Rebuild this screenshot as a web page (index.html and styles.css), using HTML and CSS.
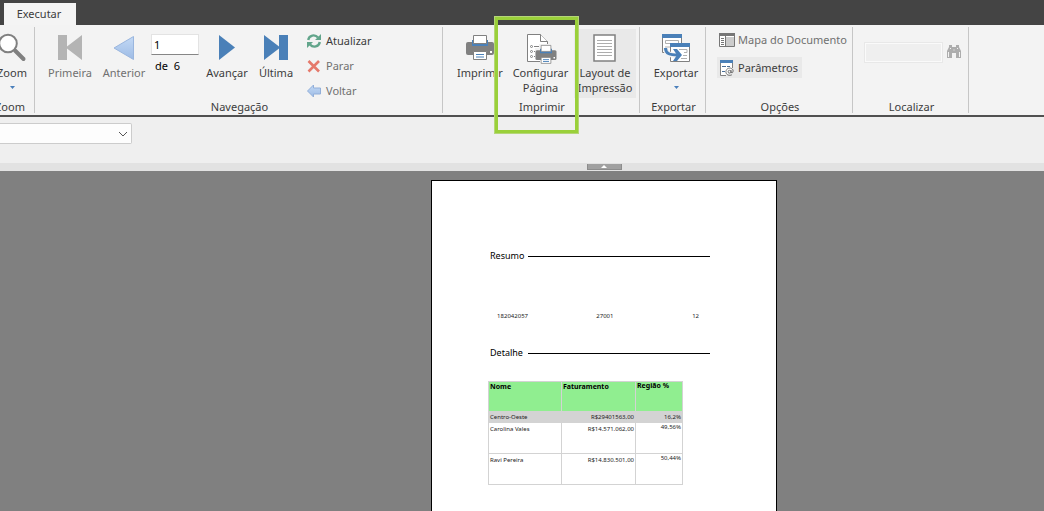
FILE: index.html
```html
<!DOCTYPE html>
<html lang="pt-BR">
<head>
<meta charset="utf-8">
<title>Executar</title>
<link rel="stylesheet" href="styles.css">
</head>
<body>
<div class="app">
  <header class="tabs"><button class="tab">Executar</button></header>

  <div class="ribbon">
    <section class="group group-zoom">
      <div class="body">
        <button class="big w44">
          <svg class="icon" viewBox="0 0 32 30"><path d="M19 17.500L27.500 26" stroke="#808080" stroke-width="4" stroke-linecap="round"/><circle cx="12" cy="10.500" r="8.800" fill="#fff" stroke="#808080" stroke-width="2"/></svg>
          <span>Zoom</span>
          <svg class="caret" viewBox="0 0 5 3"><path d="M0 0h5L2.500 3z" fill="#4a7fbb"/></svg>
        </button>
      </div>
      <h2>Zoom</h2>
    </section>

    <section class="group group-nav">
      <div class="body">
        <button class="big w54 dim">
          <svg class="icon" viewBox="0 0 32 30"><path d="M4 2h9v11.500L28 2v25L13 15.500V27H4z" fill="#b4b4b4"/></svg>
          <span>Primeira</span>
        </button>
        <button class="big w54 dim">
          <svg class="icon" viewBox="0 0 32 30"><defs><linearGradient id="blue" x2="0" y2="1"><stop offset="0" stop-color="#c3d9f5"/><stop offset="1" stop-color="#9dbbe5"/></linearGradient></defs><path d="M25.500 3.500v23L6 15z" fill="url(#blue)" stroke="#9ab6de" stroke-linejoin="round"/></svg>
          <span>Anterior</span>
        </button>
        <div class="pager">
          <input type="text" value="1" aria-label="Página">
          <span>de&nbsp; 6</span>
        </div>
        <button class="big w54 next">
          <svg class="icon" viewBox="0 0 32 30"><path d="M8 2l16 12.500L8 27z" fill="#4a80b8"/></svg>
          <span>Avançar</span>
        </button>
        <button class="big w44">
          <svg class="icon" viewBox="0 0 32 30"><path d="M4 2l15 11.500V2h9v25h-9V15.500L4 27z" fill="#4a80b8"/></svg>
          <span>Última</span>
        </button>
        <div class="commands">
          <button class="small"><svg class="icon14" viewBox="0 0 14 14"><g fill="none" stroke="#62a58b" stroke-width="2.400"><path d="M1.200 6C2 1 8 0 11 3.500M12.800 8C12 13 6 14 3 10.500"/></g><path d="M14 0v6H8zM0 14V8h6z" fill="#62a58b"/></svg>Atualizar</button>
          <button class="small dim"><svg class="icon14" viewBox="0 0 14 14"><path d="M1.500 2l10.500 10.500M12 2L1.500 12.500" stroke="#e5796b" stroke-width="2.600"/></svg>Parar</button>
          <button class="small dim"><svg class="icon14" viewBox="0 0 14 14"><path d="M.5 7L6.500 1v3H13.500v6H6.500v3z" fill="url(#blue)" stroke="#92afd9"/></svg>Voltar</button>
        </div>
      </div>
      <h2>Navegação</h2>
    </section>

    <section class="group group-print">
      <div class="body">
        <button class="big w54">
          <svg class="icon" viewBox="0 0 32 30"><g id="printer"><path d="M2 11q0-2 2-2h24q2 0 2 2v9q0 2-2 2H4q-2 0-2-2z" fill="#808080"/><path d="M8 7h16v6H8z" fill="#4a80b8"/><path d="M9.500 2.500h13v8h-13zM9.500 18.500h13v8h-13z" fill="#fff" stroke="#808080"/><path d="M12 21.500h8M12 24h8" stroke="#4a80b8" stroke-width="1.200"/><path d="M26 18h2v2h-2z" fill="#fff"/></g></svg>
          <span>Imprimir</span>
        </button>
        <button class="big w67">
          <svg class="icon" viewBox="0 0 32 30"><path d="M2.500 1.500h13l7 7v20h-20z" fill="#fff" stroke="#808080"/><path d="M15.500 1.500v7h7" fill="#fff" stroke="#808080"/><g fill="#fff" stroke="#808080"><circle cx="6.500" cy="13.500" r="1"/><circle cx="6.500" cy="18.500" r="1"/><circle cx="6.500" cy="23.500" r="1"/><path d="M9 13.500h7M9 18.500h2M9 23.500h2"/></g><path d="M10 15h4v-4h12v4h5v12h-5v4H15v-4h-5z" fill="#f3f3f3"/><use href="#printer" transform="translate(9 10.500) scale(.75)"/></svg>
          <span>Configurar<br>Página</span>
        </button>
        <button class="big w62 active">
          <svg class="icon" viewBox="0 0 32 30"><path d="M5 2h21v26H5z" fill="#fff" stroke="#808080" stroke-width="1.500"/><path d="M8 7.500h15M8 10.500h15M8 13.500h15M8 16.500h15M8 19.500h15M8 22.500h15" stroke="#adadad"/></svg>
          <span>Layout de<br>Impressão</span>
        </button>
      </div>
      <h2>Imprimir</h2>
    </section>

    <section class="group group-export">
      <div class="body">
        <button class="big w56">
          <svg class="icon" viewBox="0 0 32 30"><path d="M2.500 2.500h19v17h-19z" fill="#fff" stroke="#808080"/><path d="M2 1h20v4H2z" fill="#4a80b8"/><path d="M5.500 7.500h13v3h-13zM5 14h5" fill="none" stroke="#b0b0b0"/><path d="M10.500 10.500h19v18h-19z" fill="#fff" stroke="#808080"/><path d="M10 10h20v4H10z" fill="#4a80b8"/><path d="M19 16.500h8v3h-3M23 22.500h4M21 25.500h6" fill="none" stroke="#b0b0b0"/><path d="M5.500 15c0 6 5 7.500 12 7.500" fill="none" stroke="#f3f3f3" stroke-width="5"/><path d="M5.500 15c0 6 5 7 12 7" fill="none" stroke="#4a80b8" stroke-width="3"/><path d="M13 16h4l5 6-5 6h-4l4-6z" fill="#4a80b8"/></svg>
          <span>Exportar</span>
          <svg class="caret" viewBox="0 0 5 3"><path d="M0 0h5L2.500 3z" fill="#4a7fbb"/></svg>
        </button>
      </div>
      <h2>Exportar</h2>
    </section>

    <section class="group group-options">
      <div class="body options">
        <button class="option dim"><svg class="icon16" viewBox="0 0 16 16"><path d="M.5 1.500h15v13H.5z" fill="#fff" stroke="#777"/><path d="M0 1h16v3H0z" fill="#777"/><path d="M7 5h8v9H7z" fill="#ccc"/><path d="M6.500 4v10" stroke="#777"/><path d="M2 6.500h3M2 8.500h3M2 10.500h3M2 12.500h3" stroke="#777"/></svg>Mapa do Documento</button>
        <button class="option active"><svg class="icon16" viewBox="0 0 16 16"><path d="M7 15.500H1.500V.5h12V8" fill="#fff" stroke="#808080"/><path d="M1 0h13v3H1z" fill="#4a80b8"/><path d="M3 6.500h4M8 6.500h3M3 11.500h3" stroke="#4a6f98"/><g fill="none" stroke="#666" stroke-width=".9"><circle cx="10.500" cy="11.700" r="1.400"/><path d="M12 10v2.500q2 1 2.200-1.500c-.2-4-7-4-7.300.7 0 3.600 3.600 4.300 6 3.100"/></g></svg>Parâmetros</button>
      </div>
      <h2>Opções</h2>
    </section>

    <section class="group group-find">
      <div class="body find">
        <input type="text" aria-label="Localizar" disabled>
        <button class="find-button" aria-label="Localizar" disabled><svg class="icon16" viewBox="0 0 16 16"><path d="M3 1h3v2h4V1h3v2l2 4v7h-5v-5H6v5H1V7l2-4z" fill="#adadad"/><path d="M2.500 8v5M13.500 8v5M4 4.500h1M11 4.500h1M7.500 6h1" stroke="#f3f3f3"/></svg></button>
      </div>
      <h2>Localizar</h2>
    </section>

    <div class="callout"></div>
  </div>

  <div class="parameters">
    <div class="combo">
      <select aria-label="Parâmetro"><option></option></select>
      <svg class="chevron" viewBox="0 0 10 6"><path d="M1 1l4 4 4-4" fill="none" stroke="#555"/></svg>
    </div>
  </div>
  <div class="splitter"><button class="handle" aria-label="Recolher"><svg viewBox="0 0 6 3"><path d="M0 3h6L3 0z" fill="#fff"/></svg></button></div>

  <main class="viewer">
    <article class="page">
      <h3>Resumo</h3>
      <div class="totals"><span>182042057</span><span>27001</span><span>12</span></div>
      <h3>Detalhe</h3>
      <table>
        <colgroup><col class="name"><col class="amount"><col class="share"></colgroup>
        <thead><tr><th>Nome</th><th>Faturamento</th><th class="raised">Região %</th></tr></thead>
        <tbody>
          <tr class="region"><td>Centro-Oeste</td><td>R$29401563,00</td><td>16,2%</td></tr>
          <tr><td>Carolina Vales</td><td>R$14.571.062,00</td><td class="raised">49,56%</td></tr>
          <tr><td>Ravi Pereira</td><td>R$14.830.501,00</td><td class="raised">50,44%</td></tr>
        </tbody>
      </table>
    </article>
  </main>
</div>
</body>
</html>
```
FILE: styles.css
```css
* { box-sizing: border-box; }
body { margin: 0; font: 11px/15px "Noto Sans", "Open Sans", sans-serif; color: #3c3c3c; }
button, input, select { font: inherit; color: inherit; margin: 0; padding: 0; border: 0; background: none; border-radius: 0; }
h2, h3 { margin: 0; font-weight: normal; }
svg { display: block; overflow: visible; flex: none; }

.app { display: flex; flex-direction: column; min-height: 100vh; overflow: hidden; }
.tabs { display: flex; height: 25px; padding: 3px 4px 0; background: #444; }
.tab { width: 72px; padding: 0 2px 2px 0; background: #f4f4f4; }

.ribbon { position: relative; display: flex; padding: 2px 0; background: #f3f3f3; border-bottom: 2px solid #505050; }
.group { display: flex; flex-direction: column; flex: none; border-right: 1px solid #c6c6c6; }
.body { display: flex; align-items: flex-start; height: 73px; padding-top: 2px; }
.group h2 { padding-left: 2px; font-size: 11px; line-height: 13px; text-align: center; }
.group-zoom { width: 51px; margin-left: -16px; }
.group-zoom .body { justify-content: flex-end; }
.group-nav { width: 408px; }
.group-nav .body { padding-left: 8px; }
.group-print { width: 197px; }
.group-print .body { padding-left: 10px; }
.group-export { width: 66px; }
.group-export .body { padding-left: 8px; }
.group-options { width: 147px; }
.group-find { width: 116px; }

.big { display: flex; flex-direction: column; align-items: center; flex: none; height: 69px; padding-top: 4px; white-space: nowrap; }
.big span { margin-top: 2px; line-height: 15px; }
.icon { width: 32px; height: 30px; }
.caret { width: 5px; height: 3px; margin-top: 6px; }
.w44 { width: 44px; }
.w54 { width: 54px; }
.w56 { width: 56px; }
.w62 { width: 62px; }
.w67 { width: 67px; }
.dim { color: #707070; }
.active { background: #e9e9e9; }
.next { margin-left: 1px; }

.pager { display: flex; flex-direction: column; gap: 3px; width: 48px; padding-top: 5px; color: #000; }
.pager input { width: 100%; height: 21px; padding: 0 2px; background: #fff; border: 1px solid #e3e3e3; border-bottom-color: #868686; }
.pager span { padding-left: 4px; line-height: 15px; }

.group-nav .commands { display: flex; flex-direction: column; margin: -1px 0 0 9px; }
.small { display: flex; align-items: center; gap: 5px; height: 25px; }
.icon14 { width: 14px; height: 14px; }
.icon16 { width: 16px; height: 16px; }

.options { flex-direction: column; gap: 7px; padding-left: 11px; }
.option { display: flex; align-items: center; gap: 3px; height: 21px; padding: 0 4px 0 2px; white-space: nowrap; }

.find { gap: 3px; padding: 15px 0 0 11px; }
.find input { width: 79px; height: 21px; background: #efefef; border: 1px solid #e8e8e8; outline: 1px solid #fafafa; outline-offset: -2px; }
.find-button { padding-top: 2px; }

.callout { position: absolute; left: 495px; top: -8px; width: 83px; height: 116px; border: 3px solid #9ad03a; outline: 1px solid #b5d678; pointer-events: none; }

.parameters { height: 46px; padding-top: 6px; background: #efefef; }
.combo { display: flex; align-items: center; width: 132px; }
.combo select { appearance: none; width: 100%; height: 21px; background: #fdfdfd; border: 1px solid #ccc; border-left: 0; border-radius: 0 2px 2px 0; }
.chevron { width: 10px; height: 6px; margin-left: -14px; pointer-events: none; }
.splitter { display: flex; justify-content: center; height: 8px; padding: 1px 0 1px 164px; background: #e2e2e2; }
.handle { display: flex; align-items: center; justify-content: center; width: 35px; background: #a0a0a0; border: 1px solid #8c8c8c; border-top: 0; }
.handle svg { width: 6px; height: 3px; }

.viewer { display: flex; justify-content: center; flex: 1; padding: 9px 0 0 164px; background: #808080; }
.page { width: 346px; padding: 68px 66px 27px 56px; background: #fff; border: 1px solid #000; border-bottom: 0; color: #000; }
.page h3 { display: grid; grid-template-columns: 38px 1fr; align-items: center; padding-left: 2px; font-size: 9px; line-height: 14px; }
.page h3::after { content: ""; height: 1px; background: #000; }
.totals { display: grid; grid-template-columns: 40px 1fr 1fr; padding: 48px 11px 25px 0; font-size: 6px; line-height: 10px; text-align: right; color: #222; }
table { width: 195px; margin-top: 21px; border-collapse: collapse; table-layout: fixed; font-size: 6px; line-height: 8px; color: #222; }
.name { width: 73px; }
.amount { width: 74px; }
.share { width: 47px; }
th, td { height: 31px; padding: 1px; border: 1px solid #d3d3d3; text-align: right; vertical-align: top; white-space: nowrap; }
th { height: 30px; background: #90ee90; text-align: left; font-size: 7px; color: #000; }
td { padding-top: 2px; }
td:first-child { text-align: left; }
.region { background: #d3d3d3; }
.region td { height: 11px; padding-top: 1px; }
th.raised, td.raised { padding-top: 0; }
```
